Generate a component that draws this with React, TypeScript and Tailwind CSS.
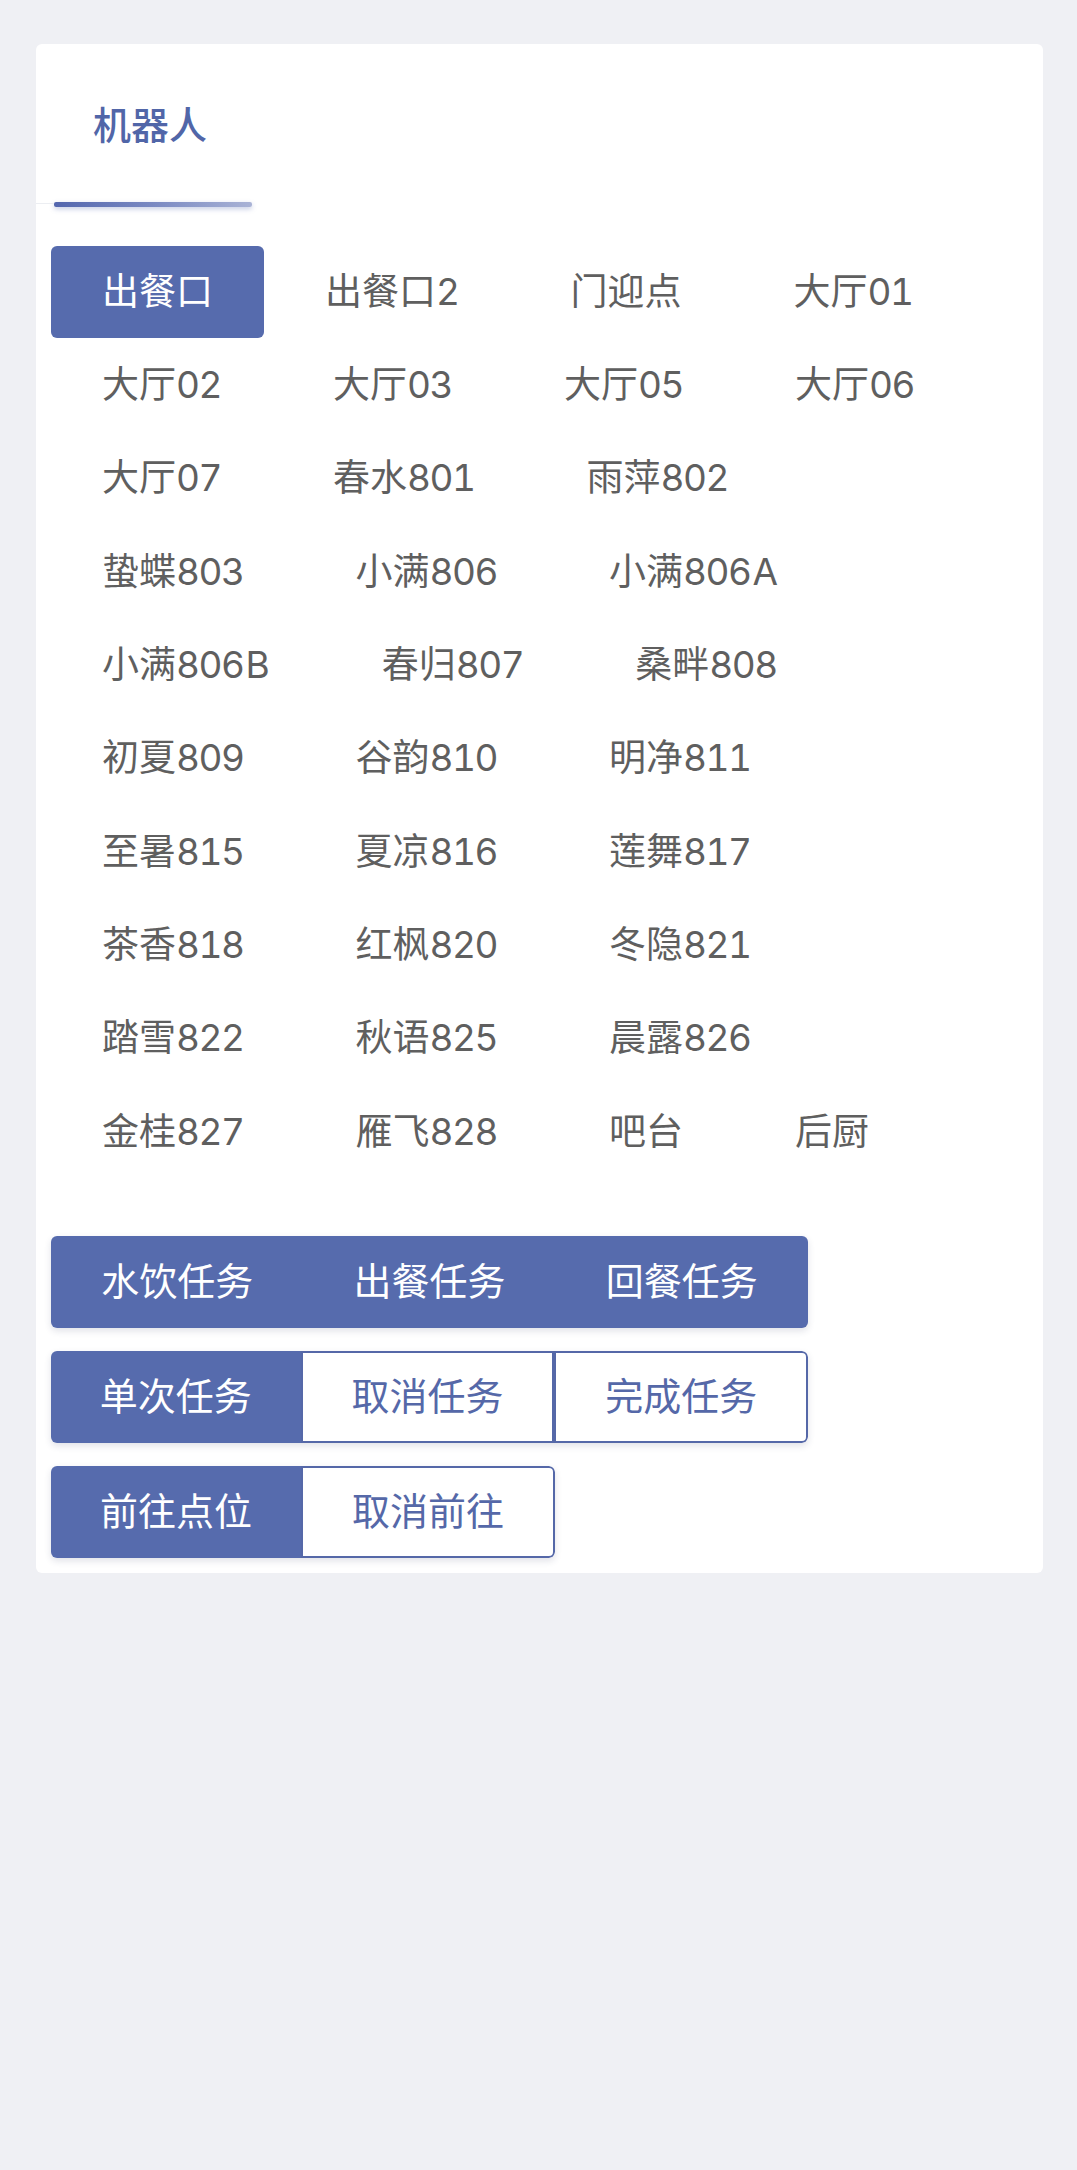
import React from "react";

const ROWS: string[][] = [
  ["出餐口", "出餐口2", "门迎点", "大厅01"],
  ["大厅02", "大厅03", "大厅05", "大厅06"],
  ["大厅07", "春水801", "雨萍802"],
  ["蛰蝶803", "小满806", "小满806A"],
  ["小满806B", "春归807", "桑畔808"],
  ["初夏809", "谷韵810", "明净811"],
  ["至暑815", "夏凉816", "莲舞817"],
  ["茶香818", "红枫820", "冬隐821"],
  ["踏雪822", "秋语825", "晨露826"],
  ["金桂827", "雁飞828", "吧台", "后厨"],
];

function Label({ name }: { name: string }) {
  const m = name.match(/^([^\x00-\x7F]*)(\d*)(.*)$/);
  const cjk = m ? m[1] : name;
  const digits = m ? m[2] : "";
  const rest = m ? m[3] : "";
  return (
    <>
      <span>{cjk}</span>
      {digits ? <span className="tracking-[-1.5px]">{digits}</span> : null}
      {rest ? <span className="pl-[2px]">{rest}</span> : null}
    </>
  );
}

function Filled({ label }: { label: string }) {
  return (
    <div className="flex-1 flex items-center justify-center bg-[#566bad] text-white">
      {label}
    </div>
  );
}

function Outline({ label, last }: { label: string; last?: boolean }) {
  return (
    <div
      className={
        last
          ? "flex-1 flex items-center justify-center bg-white border-2 border-[#5568a8] rounded-r-[6px] text-[#5568a8]"
          : "flex-1 flex items-center justify-center bg-white border-2 border-[#5568a8] text-[#5568a8]"
      }
    >
      {label}
    </div>
  );
}

export default function App() {
  return (
    <div className="min-h-[2170px] bg-[#eff0f4] pt-[44px] pl-[36px] pr-[34px] font-['Inter','Noto_Sans_CJK_SC',sans-serif]">
      <div className="bg-white rounded-[6px] pb-[15px]">
        {/* Tab header */}
        <div className="relative h-[163px]">
          <div className="absolute left-0 top-[159px] w-[18px] h-px bg-[#eceef2]" />
          <div className="ml-[18px] w-[198px] h-full flex flex-col">
            <div className="flex-1 flex items-center justify-center pt-[4px] pr-[6px] text-[38px] font-medium text-[#5166a8]">
              机器人
            </div>
            <div className="h-[5px] rounded-[2px] bg-gradient-to-r from-[#5366ae] via-[#7a89c2] to-[#aab3d6] shadow-[0_2px_5px_rgba(84,104,176,0.35)]" />
          </div>
        </div>

        {/* Point list */}
        <div className="mt-[38px] pl-[15px] flex flex-col tabular-nums">
          {ROWS.map((row, ri) => (
            <div key={ri} className="h-[93.3px] flex items-center gap-x-[10px]">
              {row.map((name) =>
                name === "出餐口" && ri === 0 ? (
                  <div
                    key={name}
                    className="h-[92px] px-[51px] flex items-center justify-center rounded-[6px] bg-[#566bad] text-white text-[37px] whitespace-nowrap"
                  >
                    <Label name={name} />
                  </div>
                ) : (
                  <div
                    key={name}
                    className="h-[92px] px-[51px] flex items-center justify-center text-[#5f5f5f] text-[37px] whitespace-nowrap"
                  >
                    <Label name={name} />
                  </div>
                )
              )}
            </div>
          ))}
        </div>

        {/* Task groups */}
        <div className="mt-[58px] pl-[15px] flex flex-col gap-[23px] text-[38px]">
          <div className="w-[757px] h-[92px] flex rounded-[6px] overflow-hidden shadow-[0_3px_7px_rgba(40,50,90,0.14)]">
            <Filled label="水饮任务" />
            <Filled label="出餐任务" />
            <Filled label="回餐任务" />
          </div>
          <div className="w-[757px] h-[92px] flex rounded-[6px] overflow-hidden shadow-[0_3px_7px_rgba(40,50,90,0.14)]">
            <Filled label="单次任务" />
            <Outline label="取消任务" />
            <Outline label="完成任务" last />
          </div>
          <div className="w-[504px] h-[92px] flex rounded-[6px] overflow-hidden shadow-[0_3px_7px_rgba(40,50,90,0.14)]">
            <Filled label="前往点位" />
            <Outline label="取消前往" last />
          </div>
        </div>
      </div>
    </div>
  );
}
